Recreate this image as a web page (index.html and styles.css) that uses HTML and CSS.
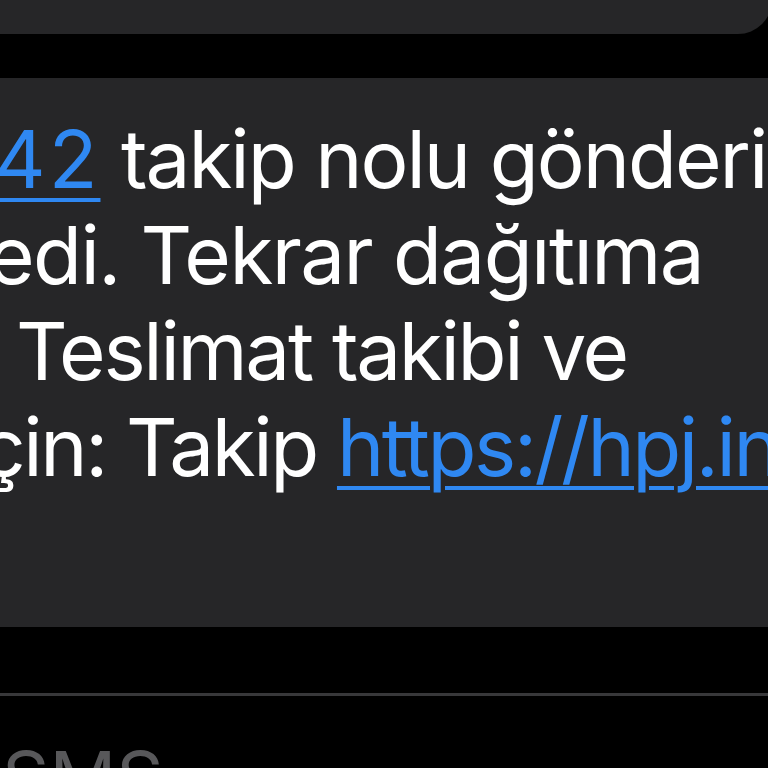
FILE: index.html
```html
<!DOCTYPE html>
<html lang="tr">
<head>
<meta charset="utf-8">
<link rel="stylesheet" href="styles.css">
</head>
<body>
<div class="screen">
  <div class="bubble-prev"></div>
  <div class="bubble">
    <div class="line line1"><a class="link link-num">42</a> takip nolu gönderiniz</div>
    <div class="line line2">edi. Tekrar dağıtıma</div>
    <div class="line line3">Teslimat takibi ve</div>
    <div class="line line4">çin: Takip <a class="link">https://hpj.in/ab</a></div>
  </div>
  <div class="divider"></div>
  <div class="label">SMS</div>
</div>
</body>
</html>
```
FILE: styles.css
```css
html, body {
  margin: 0;
  padding: 0;
  background: #000;
}
.screen {
  width: 768px;
  height: 768px;
  overflow: hidden;
  display: flex;
  flex-direction: column;
  font-family: Inter, "Noto Sans", sans-serif;
}
.bubble-prev {
  flex: none;
  height: 34px;
  margin-right: -4px;
  background: #262628;
  border-bottom-right-radius: 44px;
}
.bubble {
  flex: none;
  margin-top: 44px;
  height: 516px;
  padding-top: 33px;
  background: #262628;
  color: #fff;
  font-size: 80px;
  line-height: 96px;
  letter-spacing: -1.6px;
  overflow: hidden;
}
.line {
  white-space: nowrap;
}
.line1 { margin-left: -6px; letter-spacing: -2px; }
.line2 { margin-left: -12px; }
.line3 { margin-left: 16px; letter-spacing: -2.3px; }
.line4 { margin-left: -20px; letter-spacing: -2.4px; }
.link {
  color: #2f88f2;
  text-decoration: underline;
  text-decoration-thickness: 4px;
  text-underline-offset: 10px;
}
.link-num {
  letter-spacing: 3px;
}
.divider {
  flex: none;
  margin-top: 66px;
  height: 3px;
  background: #38383a;
}
.label {
  flex: none;
  margin-top: 42px;
  margin-left: 2px;
  color: #58585a;
  font-size: 74px;
  line-height: 80px;
}
```
